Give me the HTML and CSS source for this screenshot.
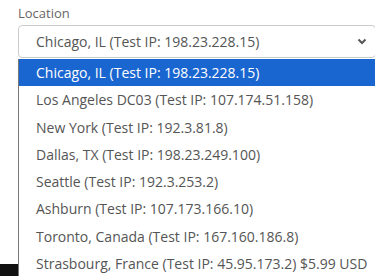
FILE: index.html
```html
<!DOCTYPE html>
<html lang="en">
<head>
    <meta charset="UTF-8">
    <title>Location</title>
    <link rel="stylesheet" href="styles.css">
</head>
<body>
    <div class="field">
        <label class="field-label">Location</label>
        <div class="select">
            <span>Chicago, IL (Test IP: 198.23.228.15)</span>
            <svg class="chevron" width="10" height="7" viewBox="0 0 10 7"><path d="M1.5 1.5l3.5 3.5 3.5-3.5" fill="none" stroke="#555" stroke-width="2"/></svg>
        </div>
        <ul class="options">
            <li class="selected">Chicago, IL (Test IP: 198.23.228.15)</li>
            <li>Los Angeles DC03 (Test IP: 107.174.51.158)</li>
            <li>New York (Test IP: 192.3.81.8)</li>
            <li>Dallas, TX (Test IP: 198.23.249.100)</li>
            <li>Seattle (Test IP: 192.3.253.2)</li>
            <li>Ashburn (Test IP: 107.173.166.10)</li>
            <li>Toronto, Canada (Test IP: 167.160.186.8)</li>
            <li>Strasbourg, France (Test IP: 45.95.173.2) $5.99 USD</li>
        </ul>
    </div>
    <div class="footer"></div>
</body>
</html>
```

FILE: styles.css
```css
html { overflow: hidden; }
body { margin: 0; font-family: "Open Sans", sans-serif; color: #555; background: #fff; }
.field { position: relative; padding: 4px 0 0 18px; }
.field-label { display: block; font-size: 13px; color: #666; line-height: 18px; margin-bottom: 3px; }
.select { box-sizing: border-box; display: flex; align-items: center; justify-content: space-between; width: 358px; height: 33px; padding: 0 8px 0 17px; border: 1px solid #ccc; border-radius: 4px; font-size: 14px; }
.chevron { display: block; }
.options { position: absolute; left: 18px; top: 59px; width: 357px; margin: 0; padding: 0; list-style: none; background: #fff; border-left: 1px solid #777; font-size: 14px; overflow: hidden; }
.options li { height: 27.3px; line-height: 27px; padding-left: 17px; white-space: nowrap; }
.options .selected { background: #1a66d0; color: #fff; }
.footer { width: 18px; height: 20px; margin-top: 206px; background: #111; }
```
